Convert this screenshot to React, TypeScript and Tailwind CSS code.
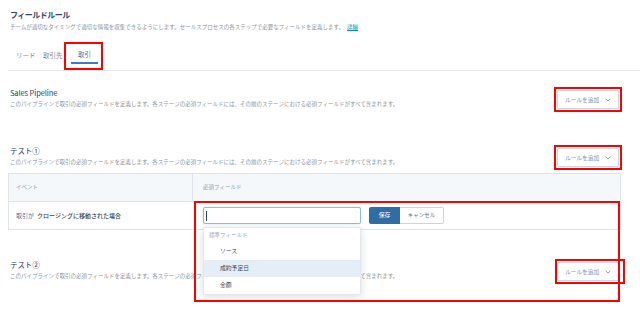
import React from "react";

function RuleButton({ box }: { box: "a" | "b" }) {
  return (
    <div className="relative mt-[2px]">
      <div className="flex h-[19px] w-[62px] items-center justify-center gap-[6px] rounded-[2px] border border-[#cbd6e2] bg-white text-[5.8px] leading-none text-[#7c98b6]">
        <span className="tracking-[-0.1px]">ルールを追加</span>
        <svg width="6" height="4" viewBox="0 0 6 4" fill="none">
          <path d="M0.6 0.8 L3 3 L5.4 0.8" stroke="#7c98b6" strokeWidth="0.9" />
        </svg>
      </div>
      {box === "a" ? (
        <span className="pointer-events-none absolute -bottom-[3px] -left-[3px] -right-[3px] -top-[3px] border-2 border-[#ff0000]" />
      ) : (
        <span className="pointer-events-none absolute -bottom-[3px] -left-[2px] -right-[6px] -top-[3px] border-2 border-[#ff0000]" />
      )}
    </div>
  );
}

function SectionHead({ title, box }: { title: string; box: "a" | "b" }) {
  return (
    <div className="flex items-start justify-between pl-[2px] pr-[2px]">
      <div>
        <div className="text-[7.5px] leading-[10px] font-normal text-[#2d3e50] tracking-[-0.1px]">{title}</div>
        <div className="mt-[3px] text-[5.5px] leading-[6px] text-[#8a949e]">
          このパイプラインで取引の必須フィールドを定義します。各ステージの必須フィールドには、その前のステージにおける必須フィールドがすべて含まれます。
        </div>
      </div>
      <RuleButton box={box} />
    </div>
  );
}

export default function App() {
  return (
    <div className="relative h-[315px] w-[640px] overflow-hidden bg-white font-['Noto_Sans_CJK_JP',sans-serif] text-[#33475b]">
      <div className="pl-[8px] pr-[19px]">
        {/* Header */}
        <div className="pl-[2px] pt-[10px]">
          <h1 className="text-[8px] leading-[10px] font-bold tracking-[-0.5px] text-[#33475b]">フィールドルール</h1>
          <p className="mt-[4px] text-[5.5px] leading-[6px] text-[#8a949e]">
            チームが適切なタイミングで適切な情報を収集できるようにします。セールスプロセスの各ステップで必要なフィールドを定義します。
            <span className="ml-[3px] text-[#0091ae] underline">詳細</span>
          </p>
        </div>

        {/* Tabs */}
        <div className="-mr-[19px] mt-[16px] flex border-b border-[#e5e8ed] pb-[6px] pl-[8px]">
          <div className="flex h-[18px] w-[27px] items-center pt-[2px] text-[6.5px] text-[#7c8a99]">リード</div>
          <div className="flex h-[18px] w-[28px] items-center pt-[2px] text-[6.5px] text-[#7c8a99]">取引先</div>
          <div className="relative flex h-[18px] items-center border-b-2 border-[#3b7bbf] px-[7px] pt-[2px] text-[6.5px] text-[#4a6d93]">
            取引
            <span className="pointer-events-none absolute -bottom-[8px] -left-[7px] -right-[5px] -top-[4px] border-2 border-[#ff0000]" />
          </div>
        </div>

        {/* Section 1 */}
        <div className="mt-[17px]">
          <SectionHead title="Sales Pipeline" box="a" />
        </div>

        {/* Section 2 */}
        <div className="mt-[37px]">
          <SectionHead title="テスト①" box="a" />
        </div>

        {/* Table */}
        <div className="mt-[6px] border border-[#dfe3eb]">
          <div className="flex h-[27px] bg-[#f5f8fa] text-[5.5px] text-[#8a9aab]">
            <div className="flex w-[184px] items-center border-r border-[#dfe3eb] pl-[7px]">イベント</div>
            <div className="flex flex-1 items-center pl-[10px]">必須フィールド</div>
          </div>
          <div className="flex h-[28px] border-t border-[#dfe3eb] bg-white">
            <div className="flex w-[184px] items-center pl-[7px] text-[6px] text-[#506e91]">
              取引が<span className="ml-[3px] font-medium text-[#33475b]">クロージングに移動された場合</span>
            </div>
            <div className="relative flex flex-1 items-center pl-[10px]">
              <div className="relative">
                <div className="flex h-[17px] w-[158px] items-center rounded-[2px] border border-[#8fbde0] bg-white pl-[2px] shadow-[0_0_2px_rgba(0,145,174,0.25)]">
                  <div className="h-[10px] w-[1px] bg-[#33475b]" />
                </div>
                {/* Dropdown */}
                <div className="absolute left-0 top-[20px] z-10 w-[158px] rounded-[2px] border border-[#e3e8ee] bg-white shadow-[0_2px_8px_rgba(45,62,80,0.18)]">
                  <div className="flex h-[15px] items-center pl-[5px] text-[5.5px] text-[#9aa5b1]">標準フィールド</div>
                  <div className="flex h-[17px] items-center pl-[16px] text-[5.8px] text-[#33475b]">ソース</div>
                  <div className="flex h-[17px] items-center bg-[#e5eef7] pl-[16px] text-[5.8px] text-[#33475b]">成約予定日</div>
                  <div className="flex h-[17px] items-center pl-[16px] text-[5.8px] text-[#33475b]">金額</div>
                </div>
              </div>
              <div className="ml-[8px] flex h-[17px]">
                <div className="flex w-[31px] items-center justify-center rounded-l-[2px] bg-[#2f6ea5] text-[5.8px] text-white">保存</div>
                <div className="flex w-[44px] items-center justify-center rounded-r-[2px] border border-l-0 border-[#c5d3e2] bg-white text-[5.5px] text-[#506e91]">キャンセル</div>
              </div>
              <span className="pointer-events-none absolute left-[1px] right-0 top-[-1px] z-20 h-[101px] border-2 border-[#ff0000]" />
            </div>
          </div>
        </div>

        {/* Section 3 */}
        <div className="mt-[30px]">
          <SectionHead title="テスト②" box="b" />
        </div>
      </div>
    </div>
  );
}
